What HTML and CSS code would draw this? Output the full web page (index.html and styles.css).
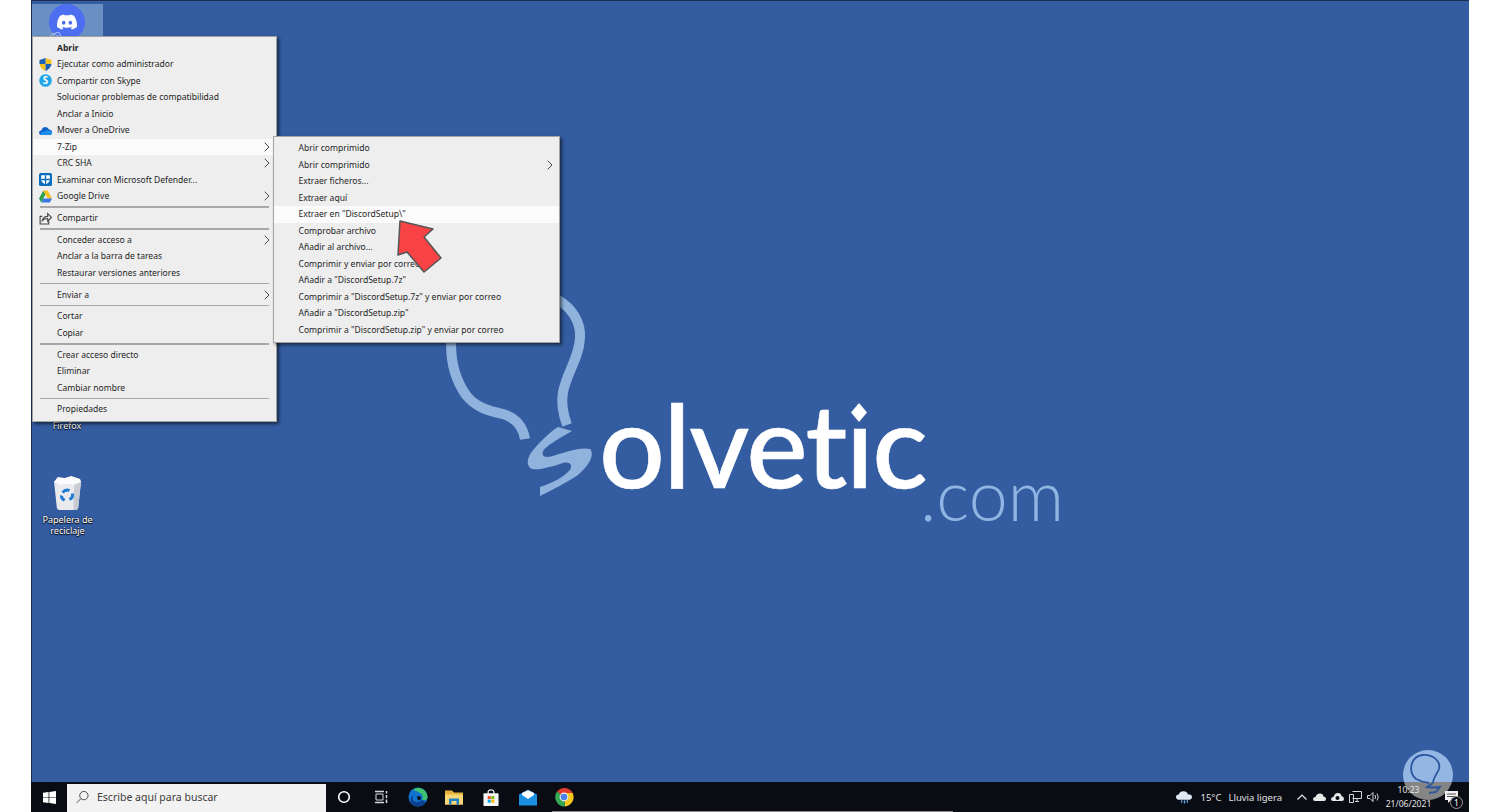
FILE: index.html
```html
<!DOCTYPE html>
<html lang="es">
<head>
<meta charset="utf-8">
<title>Solvetic</title>
<link rel="stylesheet" href="styles.css">
</head>
<body>
<main class="screen">
  <section class="desktop">
    <svg class="bulb" viewBox="440 295 160 210">
      <path class="bulb-line" d="M452 330C449 355 454 378 466 395C476 408 490 411 503 414C516 418 523 427 525 439"/>
      <path class="bulb-line" d="M558 300C572 308 581 322 580 338C579 358 567 372 563 392C561 403 563 414 567 425"/>
      <path class="bulb-fill" d="M558 427L572 431C558 439 546 446 543 451C541 458 547 458 556 455C568 451 582 447 590 449C594 453 592 463 578 475C566 483 550 491 540 496L540 487C552 483 564 477 570 470C573 465 570 460 560 464C548 468 538 470 532 469C526 466 526 458 534 449C540 442 550 432 558 427Z"/>
    </svg>
    <p class="logo-word">olvet<span class="logo-i">i</span>c</p>
    <span class="logo-dot"></span>
    <p class="logo-com">.com</p>

    <div class="desk-icon discord-icon">
      <span class="discord-disc">
        <svg viewBox="0 0 24 24"><path fill="#fff" d="M20.317 4.3698a19.7913 19.7913 0 00-4.8851-1.5152.0741.0741 0 00-.0785.0371c-.211.3753-.4447.8648-.6083 1.2495-1.8447-.2762-3.68-.2762-5.4868 0-.1636-.3933-.4058-.8742-.6177-1.2495a.077.077 0 00-.0785-.037 19.7363 19.7363 0 00-4.8852 1.515.0699.0699 0 00-.0321.0277C.5334 9.0458-.319 13.5799.0992 18.0578a.0824.0824 0 00.0312.0561c2.0528 1.5076 4.0413 2.4228 5.9929 3.0294a.0777.0777 0 00.0842-.0276c.4616-.6304.8731-1.2952 1.226-1.9942a.076.076 0 00-.0416-.1057c-.6528-.2476-1.2743-.5495-1.8722-.8923a.077.077 0 01-.0076-.1277c.1258-.0943.2517-.1923.3718-.2914a.0743.0743 0 01.0776-.0105c3.9278 1.7933 8.18 1.7933 12.0614 0a.0739.0739 0 01.0785.0095c.1202.099.246.1981.3728.2924a.077.077 0 01-.0066.1276 12.2986 12.2986 0 01-1.873.8914.0766.0766 0 00-.0407.1067c.3604.698.7719 1.3628 1.225 1.9932a.076.076 0 00.0842.0286c1.961-.6067 3.9495-1.5219 6.0023-3.0294a.077.077 0 00.0313-.0552c.5004-5.177-.8382-9.6739-3.5485-13.6604a.061.061 0 00-.0312-.0286zM8.02 15.3312c-1.1825 0-2.1569-1.0857-2.1569-2.419 0-1.3332.9555-2.4189 2.157-2.4189 1.2108 0 2.1757 1.0952 2.1568 2.419 0 1.3332-.9555 2.4189-2.1569 2.4189zm7.9748 0c-1.1825 0-2.1569-1.0857-2.1569-2.419 0-1.3332.9554-2.4189 2.1569-2.4189 1.2108 0 2.1757 1.0952 2.1568 2.419 0 1.3332-.946 2.4189-2.1568 2.4189Z"/></svg>
      </span>
      <svg class="share-mark" viewBox="0 0 12 5"><path d="M1 5Q3 1 6 3M4 5Q6 0 10 2Q11 3 11 5M7 5Q8 3 9 5"/></svg>
    </div>

    <div class="desk-label firefox-label">Firefox</div>

    <div class="desk-icon bin-icon">
      <svg viewBox="0 0 30 36">
        <path fill="#e8eaee" d="M1 5L4 33Q4.500 35 7 35L23 35Q25.500 35 26 33L29 5Z"/>
        <path fill="#fbfbfc" d="M1 6L5 1L12 2L19 0L28 3L29 6L22 9L14 8L7 9Z"/>
        <path fill="#c8ccd2" d="M22 9L29 6L26 33Q25.500 35 23 35L21 35Z"/>
        <path fill="none" stroke="#1f78d1" stroke-width="3" d="M10 17Q13 13 17 15M20 18Q21 23 17 24M12 25Q8 23 9 20"/>
      </svg>
      <span class="desk-label bin-label">Papelera de<br>reciclaje</span>
    </div>

    <nav class="menu main-menu">
      <div class="row strong"><span class="slot"></span>Abrir</div>
      <div class="row"><span class="slot">
        <svg viewBox="0 0 12 13"><path fill="#f4c11e" d="M6 0L12 2V6L6 6Z"/><path fill="#1c5fb8" d="M6 0L0 2V6L6 6Z"/><path fill="#f4c11e" d="M0 6H6V13Q1 11 0 6Z"/><path fill="#1c5fb8" d="M12 6H6V13Q11 11 12 6Z"/></svg>
      </span>Ejecutar como administrador</div>
      <div class="row"><span class="slot">
        <svg viewBox="0 0 12 12"><circle cx="6" cy="6" r="5.800" fill="#1fa5e8"/><text class="skype-s" x="6" y="9.300" text-anchor="middle">S</text></svg>
      </span>Compartir con Skype</div>
      <div class="row"><span class="slot"></span>Solucionar problemas de compatibilidad</div>
      <div class="row"><span class="slot"></span>Anclar a Inicio</div>
      <div class="row"><span class="slot">
        <svg viewBox="0 0 13 9"><path fill="#0a62c9" d="M2 9Q0 8.500 0 6.500Q0 4.500 2.500 4.300Q3.500 1 6.500 1Q9 1 10 3.500Q13 3.800 13 6.500Q13 8.500 11 9Z"/><path fill="#1d8fe8" d="M2.500 9Q1 8.800 2 6.800Q4 5 6 5.500Q8 3.800 10 4.500Q13 5 13 7Q13 9 11 9Z"/></svg>
      </span>Mover a OneDrive</div>
      <div class="row active"><span class="slot"></span>7-Zip<svg class="chev" viewBox="0 0 6 10"><path d="M.7.7L5 5L.7 9.300"/></svg></div>
      <div class="row"><span class="slot"></span>CRC SHA<svg class="chev" viewBox="0 0 6 10"><path d="M.7.7L5 5L.7 9.300"/></svg></div>
      <div class="row"><span class="slot">
        <svg viewBox="0 0 12 12"><rect width="12" height="12" rx="1.500" fill="#0c6dbd"/><path fill="#fff" d="M2 2H10V6.500Q9.500 9 6 10.500Q2.500 9 2 6.500Z"/><path stroke="#0c6dbd" stroke-width="1.200" d="M6 2V11M2 6H10"/></svg>
      </span>Examinar con Microsoft Defender...</div>
      <div class="row"><span class="slot">
        <svg viewBox="0 0 13 12"><path fill="#2f9e4f" d="M4.300 0L0 8L2.200 12L6.500 4Z"/><path fill="#f5bf1e" d="M4.300 0H8.700L13 8H8.700Z"/><path fill="#3b78e7" d="M2.200 12H10.800L13 8H4.500Z"/></svg>
      </span>Google Drive<svg class="chev" viewBox="0 0 6 10"><path d="M.7.7L5 5L.7 9.300"/></svg></div>
      <hr class="sep">
      <div class="row"><span class="slot">
        <svg viewBox="0 0 12 12"><path class="line-icon" d="M3 4H1V11H9V8M3 8Q4 4 8 4V1.500L11.500 5L8 8.500V6Q5 6 3 8Z"/></svg>
      </span>Compartir</div>
      <hr class="sep">
      <div class="row"><span class="slot"></span>Conceder acceso a<svg class="chev" viewBox="0 0 6 10"><path d="M.7.7L5 5L.7 9.300"/></svg></div>
      <div class="row"><span class="slot"></span>Anclar a la barra de tareas</div>
      <div class="row"><span class="slot"></span>Restaurar versiones anteriores</div>
      <hr class="sep">
      <div class="row"><span class="slot"></span>Enviar a<svg class="chev" viewBox="0 0 6 10"><path d="M.7.7L5 5L.7 9.300"/></svg></div>
      <hr class="sep">
      <div class="row"><span class="slot"></span>Cortar</div>
      <div class="row"><span class="slot"></span>Copiar</div>
      <hr class="sep">
      <div class="row"><span class="slot"></span>Crear acceso directo</div>
      <div class="row"><span class="slot"></span>Eliminar</div>
      <div class="row"><span class="slot"></span>Cambiar nombre</div>
      <hr class="sep">
      <div class="row"><span class="slot"></span>Propiedades</div>
    </nav>

    <nav class="menu sub-menu">
      <div class="row"><span class="slot"></span>Abrir comprimido</div>
      <div class="row"><span class="slot"></span>Abrir comprimido<svg class="chev" viewBox="0 0 6 10"><path d="M.7.7L5 5L.7 9.300"/></svg></div>
      <div class="row"><span class="slot"></span>Extraer ficheros...</div>
      <div class="row"><span class="slot"></span>Extraer aquí</div>
      <div class="row active"><span class="slot"></span>Extraer en "DiscordSetup\"</div>
      <div class="row"><span class="slot"></span>Comprobar archivo</div>
      <div class="row"><span class="slot"></span>Añadir al archivo...</div>
      <div class="row"><span class="slot"></span>Comprimir y enviar por correo</div>
      <div class="row"><span class="slot"></span>Añadir a "DiscordSetup.7z"</div>
      <div class="row"><span class="slot"></span>Comprimir a "DiscordSetup.7z" y enviar por correo</div>
      <div class="row"><span class="slot"></span>Añadir a "DiscordSetup.zip"</div>
      <div class="row"><span class="slot"></span>Comprimir a "DiscordSetup.zip" y enviar por correo</div>
    </nav>

    <svg class="arrow" viewBox="0 0 50 58"><path d="M3 2L36 10L27 18L44 39L27 53L10 33L1 36Z"/></svg>
  </section>

  <footer class="taskbar">
    <div class="start">
      <svg viewBox="0 0 14 14"><path fill="#fff" d="M0 2L6 1.100V6.600H0ZM6.800 1L14 0V6.600H6.800ZM0 7.400H6V12.900L0 12ZM6.800 7.400H14V14L6.800 13Z"/></svg>
    </div>
    <div class="search">
      <svg viewBox="0 0 14 14"><circle cx="8.500" cy="5.500" r="4.500" class="line-icon"/><path class="line-icon" d="M5.300 8.700L.7 13.300"/></svg>
      <span>Escribe aquí para buscar</span>
    </div>
    <div class="apps">
      <span class="app"><svg viewBox="0 0 14 14" class="ic14"><circle cx="7" cy="7" r="5.300" fill="none" stroke="#fff" stroke-width="1.600"/></svg></span>
      <span class="app"><svg viewBox="0 0 14 14" class="ic14"><path fill="none" stroke="#d8d8d8" d="M2 4H9V10H2Z"/><path stroke="#d8d8d8" stroke-width="1.500" d="M1 1.500H10M1 12.500H10M12.500 1V3.500M12.500 5V8M12.500 9.500V13"/></svg></span>
      <span class="app"><svg viewBox="0 0 20 20" class="ic20">
        <circle cx="10" cy="10" r="9.500" fill="#1173cf"/>
        <path fill="#3fc26e" d="M5 3Q10 -1 15.500 2.500Q20 6 19.500 11Q18 14 14 13Q16 9 13 6.500Q9 3.500 5 3Z"/>
        <path fill="#0d3f8f" d="M14 13Q10 17 6 14Q3.500 11.500 5.500 8Q2 10 2.500 14.500Q5 19 10 19.500Q16 19 18 15Q16 14 14 13Z"/>
        <path fill="#0b1020" d="M9 9.500Q12 8 13 10.500Q13.500 12.500 11 13.500Q9 13 9 9.500Z"/>
      </svg></span>
      <span class="app"><svg viewBox="0 0 18 16" class="ic18">
        <path fill="#e5b13c" d="M0 1H7L9 3H18V15H0Z"/>
        <path fill="#f8d775" d="M0 5H18V15H0Z"/>
        <path fill="#1f82c8" d="M4 15V9H14V15H11.500V11.500H6.500V15Z"/>
      </svg></span>
      <span class="app"><svg viewBox="0 0 16 18" class="ic18">
        <path fill="none" stroke="#f1f1f1" stroke-width="1.300" d="M5 5V3Q5 1 8 1Q11 1 11 3V5"/>
        <rect y="4.500" width="16" height="13.500" rx=".8" fill="#f5f5f5"/>
        <rect x="4.500" y="7.500" width="3.200" height="3.200" fill="#f25022"/>
        <rect x="8.300" y="7.500" width="3.200" height="3.200" fill="#7fba00"/>
        <rect x="4.500" y="11.300" width="3.200" height="3.200" fill="#00a4ef"/>
        <rect x="8.300" y="11.300" width="3.200" height="3.200" fill="#ffb900"/>
      </svg></span>
      <span class="app"><svg viewBox="0 0 18 16" class="ic18">
        <path fill="#1a8ee0" d="M0 5L9 0L18 5V16H0Z"/>
        <path fill="#fff" d="M3 3.500L9 .8L15 3.500V5.500L9 9.500L3 5.500Z"/>
      </svg></span>
      <span class="app"><svg viewBox="0 0 20 20" class="ic20">
        <path fill="#e33b2e" d="M10 10L3 4.500A9.500 9.500 0 0 1 18.700 6H10Z"/>
        <path fill="#f8c71d" d="M10 10V6H18.700A9.500 9.500 0 0 1 11 19.500Z"/>
        <path fill="#34a853" d="M10 10L11 19.500A9.500 9.500 0 0 1 3 4.500Z"/>
        <circle cx="10" cy="10" r="4.400" fill="#f2f2f2"/>
        <circle cx="10" cy="10" r="3.300" fill="#4d82e8"/>
      </svg></span>
    </div>
    <div class="tray">
      <svg class="weather" viewBox="0 0 17 14"><path fill="#dfe9f3" d="M4 10Q0 10 0 7Q0 4.500 3 4.300Q4 1 8 1Q11.500 1 12.500 4Q17 4 17 7Q17 10 13 10Z"/><path stroke="#5ba6e6" stroke-width="1.400" d="M6 10.500V13M9 10.500V14M12 10.500V13"/></svg>
      <span class="temp">15°C</span>
      <span class="cond">Lluvia ligera</span>
      <svg class="tray-ic chevron-up" viewBox="0 0 10 6"><path d="M.5 5.500L5 1L9.500 5.500"/></svg>
      <svg class="tray-ic" viewBox="0 0 13 8"><path fill="#e8e8e8" d="M2 8Q0 8 0 6Q0 4 2.500 4Q3.500 .5 7 .5Q10 .5 10.500 3.500Q13 3.800 13 6Q13 8 11 8Z"/></svg>
      <svg class="tray-ic" viewBox="0 0 13 10"><path fill="#e8e8e8" d="M2 9Q0 9 0 7Q0 5 2.500 5Q3.500 1 7 1Q10 1 10.500 4Q13 4.300 13 7Q13 9 11 9Z"/><circle cx="6.500" cy="6" r="2" fill="#0a0c14"/></svg>
      <svg class="tray-ic" viewBox="0 0 13 12"><path fill="none" stroke="#d6d6d6" d="M3.500.5H12.500V7.500H3.500M.5 3.500H4.500V11.500H.5ZM6 10.500H10M8 7.500V10.500"/></svg>
      <svg class="tray-ic" viewBox="0 0 13 12"><path fill="none" stroke="#d6d6d6" d="M.5 4.500H3L6 1.500V10.500L3 7.500H.5ZM8 4Q9.500 6 8 8M10 2.500Q12.500 6 10 9.500"/></svg>
      <div class="clock"><span>10:23</span><span>21/06/2021</span></div>
      <div class="notify">
        <svg viewBox="0 0 13 13"><path fill="#f2f2f2" d="M0 0H13V9H6L3 12V9H0Z"/><path stroke="#555" d="M2 3H11M2 5.500H11"/></svg>
        <span class="badge">1</span>
      </div>
    </div>
    <span class="tray-line"></span>
    <div class="watermark">
      <svg viewBox="0 0 50 50"><path class="mark-line" d="M13 29C5 22 7 7 19 5C30 4 38 11 36 19C34 24 30 28 30 33"/><path class="mark-line" d="M13 29Q19 32 26 33"/><path class="mark-line" d="M30 33L24 37Q30 38 37 37L33 42L26 43"/></svg>
    </div>
  </footer>
</main>
</body>
</html>
```

FILE: styles.css
```css
* { box-sizing: border-box; }

html, body {
  margin: 0;
  height: 100%;
  background: #fff;
}

.screen {
  width: 1438px;
  height: 812px;
  margin: 0 auto;
  display: flex;
  flex-direction: column;
  position: relative;
  overflow: hidden;
  font-family: "Noto Sans", "Open Sans", sans-serif;
}

.desktop {
  position: relative;
  flex: 1;
  background: #345ca0;
  border-left: 1px solid #1c2f52;
  border-top: 1px solid #1c2f52;
}

/* Logo */
.bulb {
  position: absolute;
  left: 408px;
  top: 294px;
  width: 160px;
  height: 210px;
}
.bulb-line {
  fill: none;
  stroke: #8fb3dd;
  stroke-width: 10;
}
.bulb-fill { fill: #8fb3dd; }

.logo-word {
  position: absolute;
  left: 567px;
  top: 373px;
  margin: 0;
  font: 500 116px/140px Lato, sans-serif;
  letter-spacing: -1.700px;
  -webkit-text-stroke: 0.6px #fff;
  color: #fff;
  white-space: nowrap;
}
.logo-i {
  display: inline-block;
  clip-path: inset(50px -4px 0 -4px);
}
.logo-dot {
  position: absolute;
  left: 819px;
  top: 402px;
  width: 16px;
  height: 19px;
  background: #fff;
  clip-path: polygon(50% 0, 100% 50%, 50% 100%, 0 50%);
}
.logo-com {
  position: absolute;
  left: 888px;
  top: 451px;
  margin: 0;
  font: 300 70px/84px Lato, sans-serif;
  color: #8fb5e2;
  white-space: nowrap;
}

/* Desktop icons */
.desk-icon { position: absolute; }
.discord-icon {
  left: 0;
  top: 3px;
  width: 71px;
  height: 40px;
  background: #6a8fc4;
}
.discord-disc {
  position: absolute;
  left: 17px;
  top: 0;
  width: 36px;
  height: 36px;
  border-radius: 50%;
  background: #4e6ef2;
  display: flex;
  align-items: center;
  justify-content: center;
}
.discord-disc svg { width: 20px; height: 20px; }
.share-mark {
  position: absolute;
  left: 17px;
  top: 27px;
  width: 13px;
  height: 5px;
}
.share-mark path {
  fill: none;
  stroke: #c9dcf2;
  stroke-width: 0.800;
}

.desk-label {
  color: #fff;
  font-size: 9px;
  line-height: 11px;
  text-align: center;
  text-shadow: 0 0 2px #000, 0 1px 1px #000;
}
.firefox-label {
  position: absolute;
  left: 0;
  top: 419px;
  width: 70px;
}
.bin-icon {
  left: 0;
  top: 475px;
  width: 71px;
  display: flex;
  flex-direction: column;
  align-items: center;
}
.bin-icon svg { width: 29px; height: 35px; }
.bin-label { margin-top: 3px; }

/* Context menus */
.menu {
  position: absolute;
  background: #eeeeee;
  border: 1px solid #a3a3a3;
  box-shadow: 2px 2px 3px rgba(0, 0, 0, 0.55);
  padding: 2.500px 0 2px;
  color: #262626;
  font-size: 8.550px;
}
.main-menu {
  left: 0;
  top: 35px;
  width: 245px;
  height: 386px;
  z-index: 2;
}
.sub-menu {
  left: 241px;
  top: 135px;
  width: 287px;
  height: 207px;
  padding-top: 3px;
  z-index: 3;
}
.row {
  display: flex;
  align-items: center;
  height: 16.500px;
  padding-left: 6px;
  white-space: nowrap;
}
.row.active { background: #fbfbfb; }
.row.strong { font-weight: 700; }
.slot {
  width: 18px;
  flex: none;
  display: flex;
  align-items: center;
}
.sub-menu .slot { width: 18.500px; }
.slot svg { width: 13px; height: 13px; }
.skype-s {
  fill: #fff;
  font: 700 9px "Noto Sans", sans-serif;
}
.line-icon {
  fill: none;
  stroke: #444;
  stroke-width: 1;
}
.chev {
  width: 6px;
  height: 10px;
  margin-left: auto;
  margin-right: 6px;
}
.chev path {
  fill: none;
  stroke: #4a4a4a;
  stroke-width: 1;
}
.sep {
  height: 1.500px;
  margin: 1.900px 7px;
  border: 0;
  background: #a8a8a8;
}

.arrow {
  position: absolute;
  left: 365px;
  top: 218px;
  width: 50px;
  height: 58px;
  z-index: 4;
  overflow: visible;
}
.arrow path {
  fill: #f84346;
  stroke: #555;
  stroke-width: 1.500;
  stroke-linejoin: round;
}

/* Taskbar */
.taskbar {
  position: relative;
  flex: none;
  height: 30px;
  display: flex;
  align-items: stretch;
  background: #0a0c14;
}
.start {
  width: 36px;
  display: flex;
  align-items: center;
  justify-content: center;
}
.start svg { width: 13px; height: 13px; }
.search {
  width: 259px;
  margin-top: 2px;
  display: flex;
  align-items: center;
  gap: 8px;
  padding: 0 0 2px 9px;
  background: #f2f2f2;
  color: #3c3c3c;
  font-size: 10.500px;
}
.search svg { width: 13px; height: 14px; }
.apps { display: flex; }
.app {
  width: 36.700px;
  display: flex;
  align-items: center;
  justify-content: center;
}
.ic14 { width: 14px; height: 14px; }
.ic18 { width: 18px; height: 17px; }
.ic20 { width: 20px; height: 20px; }

.tray {
  margin-left: auto;
  display: flex;
  align-items: center;
  color: #e2e2e2;
  font-size: 9.500px;
}
.weather { width: 16px; height: 14px; margin-right: 9px; }
.temp { margin-right: 7px; }
.cond { margin-right: 15px; }
.tray-ic { width: 13px; height: 12px; margin-right: 5px; }
.chevron-up { width: 10px; height: 6px; margin-right: 6px; }
.chevron-up path { fill: none; stroke: #e8e8e8; stroke-width: 1.200; }
.clock {
  width: 43px;
  display: flex;
  flex-direction: column;
  align-items: center;
  gap: 2px;
  line-height: 12px;
  margin-left: 2px;
  font-size: 8.600px;
  white-space: nowrap;
  position: relative;
  z-index: 2;
}
.notify {
  position: relative;
  align-self: stretch;
  width: 39px;
  padding: 0 0 0 3px;
  display: flex;
  align-items: center;
  justify-content: center;
  z-index: 2;
}
.notify svg { width: 13px; height: 13px; }
.badge {
  position: absolute;
  left: 20px;
  top: 14px;
  width: 13px;
  height: 13px;
  border: 1px solid #999;
  border-radius: 50%;
  background: #0a0c14;
  color: #fff;
  font-size: 8.500px;
  line-height: 11px;
  text-align: center;
}
.tray-line {
  position: absolute;
  left: 521px;
  bottom: 0;
  width: 401px;
  height: 1px;
  background: #8d8d8d;
}
.watermark {
  position: absolute;
  left: 1372px;
  top: -32px;
  width: 50px;
  height: 50px;
  border-radius: 50%;
  background: linear-gradient(#93b6e2 0 32px, #858585 32px);
  z-index: 1;
}
.watermark svg { width: 50px; height: 50px; display: block; }
.mark-line {
  fill: none;
  stroke: #2c57a0;
  stroke-width: 1.800;
}
```
